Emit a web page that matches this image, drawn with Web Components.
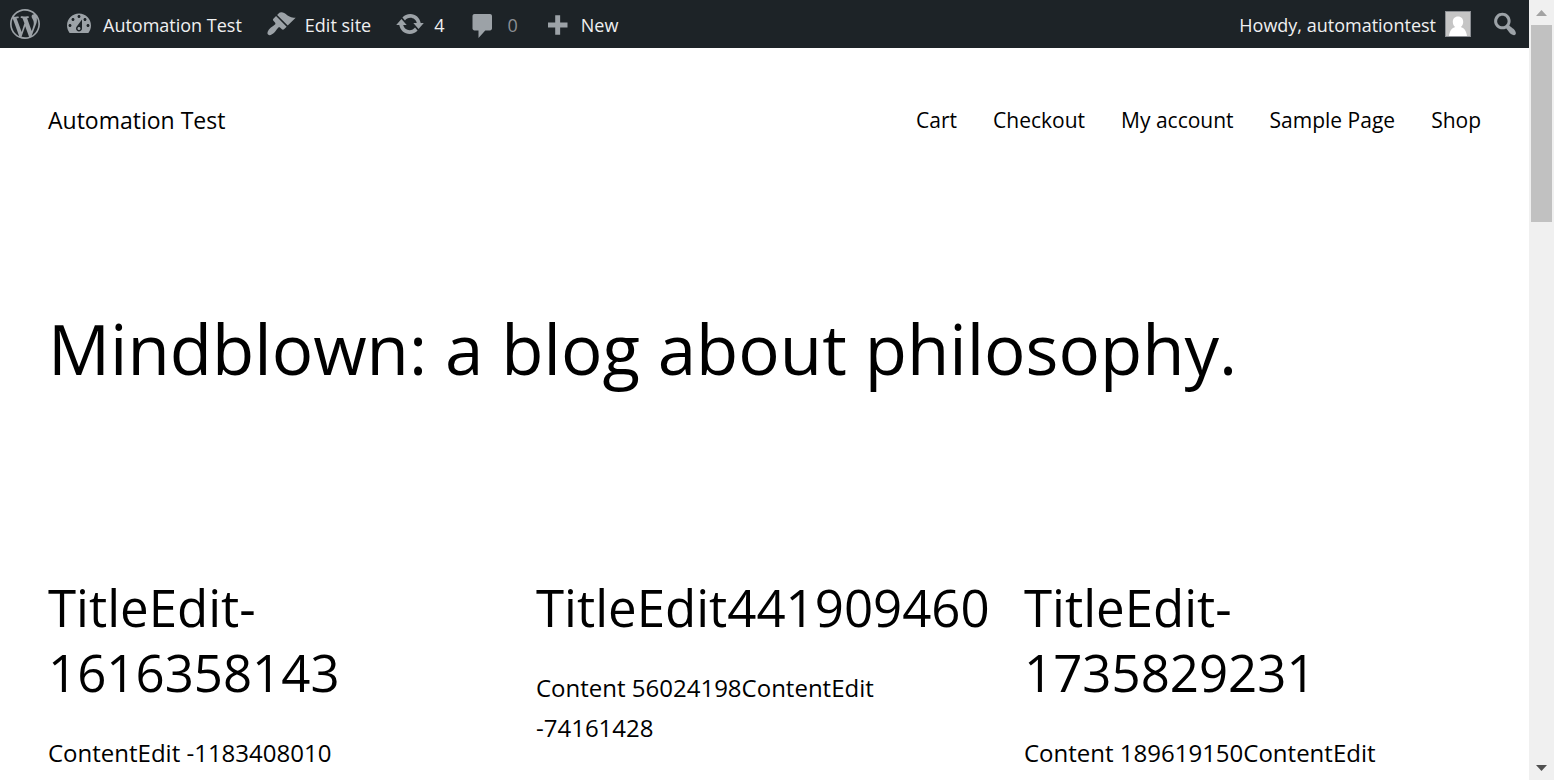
<!DOCTYPE html>
<html lang="en">
<head>
<meta charset="utf-8">
<meta name="viewport" content="width=device-width, initial-scale=1">
<title>Automation Test</title>
<style>
  body { margin: 0; background: #fff; color: #000; font-family: "Segoe UI", "Open Sans", "Noto Sans", sans-serif; }
</style>
</head>
<body>
<blog-shell>
  <admin-bar slot="bar"></admin-bar>
  <site-header name="Automation Test"></site-header>
  <page-title>Mindblown: a blog about philosophy.</page-title>
  <post-grid>
    <post-card heading="TitleEdit-1616358143">ContentEdit -1183408010</post-card>
    <post-card heading="TitleEdit441909460">Content 56024198ContentEdit -74161428</post-card>
    <post-card heading="TitleEdit-1735829231">Content 189619150ContentEdit</post-card>
  </post-grid>
</blog-shell>
<script>
const ICONS = {
  wordpress: 'M20 10c0-5.51-4.49-10-10-10C4.48 0 0 4.49 0 10c0 5.52 4.48 10 10 10 5.51 0 10-4.48 10-10zM7.78 15.37L4.37 6.22c.55-.02 1.17-.08 1.17-.08.5-.06.44-1.13-.06-1.11 0 0-1.45.11-2.37.11-.18 0-.37 0-.58-.01C4.12 2.69 6.87 1.11 10 1.11c2.33 0 4.45.87 6.05 2.34-.68-.11-1.65.39-1.65 1.58 0 .74.45 1.36.9 2.1.35.61.55 1.36.55 2.46 0 1.49-1.4 5-1.4 5l-3.03-8.37c.54-.02.82-.17.82-.17.5-.05.44-1.25-.06-1.22 0 0-1.44.12-2.38.12-.87 0-2.33-.12-2.33-.12-.5-.03-.56 1.2-.06 1.22l.92.08 1.26 3.41zM17.41 10c.24-.64.74-1.87.43-4.25.7 1.29 1.05 2.71 1.05 4.25 0 3.29-1.73 6.24-4.4 7.78.97-2.59 1.94-5.2 2.92-7.78zM6.1 18.09C3.12 16.65 1.11 13.53 1.11 10c0-1.3.23-2.48.72-3.59C3.25 10.3 4.67 14.2 6.1 18.09zm4.03-6.63l2.58 6.98c-.86.29-1.76.45-2.71.45-.79 0-1.57-.11-2.29-.33.81-2.38 1.62-4.74 2.42-7.1z',
  dashboard: 'M3.76 16h12.48c1.1-1.37 1.76-3.11 1.76-5 0-4.42-3.58-8-8-8s-8 3.58-8 8c0 1.89.66 3.63 1.76 5zM10 4c.55 0 1 .45 1 1s-.45 1-1 1-1-.45-1-1 .45-1 1-1zM6 6c.55 0 1 .45 1 1s-.45 1-1 1-1-.45-1-1 .45-1 1-1zm8 0c.55 0 1 .45 1 1s-.45 1-1 1-1-.45-1-1 .45-1 1-1zm-5.37 5.55L12 7v6c0 1.1-.9 2-2 2s-2-.9-2-2c0-.57.24-1.08.63-1.45zM4 10c.55 0 1 .45 1 1s-.45 1-1 1-1-.45-1-1 .45-1 1-1zm12 0c.55 0 1 .45 1 1s-.45 1-1 1-1-.45-1-1 .45-1 1-1zm-5 3c0-.55-.45-1-1-1s-1 .45-1 1 .45 1 1 1 1-.45 1-1z',
  brush: 'M14.48 11.06L7.41 3.99l1.5-1.5c.5-.56 2.3-.47 3.51.32 1.21.8 1.43 1.28 2.91 2.1 1.18.64 2.45 1.26 4.45.85zm-.71.71L6.7 4.7 4.93 6.47c-.39.39-.39 1.02 0 1.41l1.06 1.06c.39.39.39 1.03 0 1.42-.6.6-1.43 1.11-2.21 1.69-.35.26-.7.53-1.01.84C1.43 14.23.4 16.08 1.4 17.07c.99 1 2.84-.03 4.18-1.36.31-.31.58-.66.85-1.02.57-.78 1.08-1.61 1.69-2.21.39-.39 1.02-.39 1.41 0l1.06 1.06c.39.39 1.02.39 1.41 0z',
  update: 'M10.2 3.28c3.53 0 6.43 2.61 6.92 6h2.08l-3.5 4-3.5-4h2.32c-.45-1.97-2.21-3.45-4.32-3.45-1.45 0-2.73.71-3.54 1.78L4.95 5.66C6.23 4.2 8.11 3.28 10.2 3.28zm-.4 13.44c-3.52 0-6.43-2.61-6.92-6H.8l3.5-4c1.17 1.33 2.33 2.67 3.5 4H5.48c.45 1.97 2.21 3.45 4.32 3.45 1.45 0 2.73-.71 3.54-1.78l1.71 1.95c-1.28 1.46-3.15 2.38-5.25 2.38z',
  comment: 'M4.3 3.3h10.400c.7 0 1.300.6 1.300 1.300v8.400c0 .7-.6 1.300-1.300 1.300H11.500l-4.500 5v-5H4.300c-.7 0-1.300-.6-1.300-1.300V4.600c0-.7.6-1.300 1.300-1.300z',
  plus: 'M17 9v3.300h-4.900v4.900H8.800v-4.900H4V9h4.800V4.100h3.300V9z',
  search: 'M12.14 4.18c1.87 1.87 2.11 4.75.72 6.89.12.1.22.21.36.31.2.16.47.36.81.59.34.24.56.39.66.47.42.31.73.57.94.78.32.32.6.65.84 1 .25.35.44.69.59 1.04.14.35.21.68.18 1-.02.32-.14.59-.36.81s-.49.34-.81.36c-.31.02-.65-.04-.99-.19-.35-.14-.7-.34-1.04-.59-.35-.24-.68-.52-1-.84-.21-.21-.47-.52-.77-.93-.1-.13-.25-.35-.47-.66-.22-.32-.4-.57-.56-.78-.16-.2-.29-.35-.44-.5-2.07 1.09-4.69.76-6.44-.98-2.14-2.15-2.14-5.64 0-7.78 2.15-2.15 5.63-2.15 7.78 0zm-1.41 6.36c1.36-1.37 1.36-3.58 0-4.95-1.37-1.37-3.59-1.37-4.95 0-1.37 1.37-1.37 3.58 0 4.95 1.36 1.37 3.58 1.37 4.95 0z'
};

const define = (name, render) => customElements.define(name, class extends HTMLElement {
  constructor() { super(); this.attachShadow({ mode: 'open' }); }
  connectedCallback() { this.shadowRoot.innerHTML = render(this); }
});

define('dash-icon', el => `
  <style>
    :host { display: block; flex: none; width: 30px; height: 30px; color: #9ca2a7; }
    svg { display: block; width: 100%; height: 100%; fill: currentColor; }
  </style>
  <svg viewBox="0 0 20 20" aria-hidden="true"><path d="${ICONS[el.getAttribute('name')]}"/></svg>`);

define('user-avatar', () => `
  <style>
    :host { display: block; flex: none; box-sizing: border-box; width: 26px; height: 26px; border: 1px solid #8c8f94; background: #c5c5c5; }
    svg { display: block; width: 100%; height: 100%; fill: #fff; }
  </style>
  <svg viewBox="0 0 24 24" aria-hidden="true">
    <path d="M12 4.500c3.300 0 5.200 2.400 5.200 5.400 0 2.200-1 4.200-2.500 5.100 3.300.9 5.600 3.500 6.300 9H3c.7-5.500 3-8.100 6.300-9-1.500-.9-2.500-2.900-2.500-5.100 0-3 1.900-5.400 5.200-5.400z"/>
  </svg>`);

define('admin-item', el => `
  <style>
    :host { display: block; }
    a { display: flex; align-items: center; gap: 9px; height: 48px; color: var(--item-color, #f0f0f1); font-size: 18px; line-height: 48px; text-decoration: none; white-space: nowrap; }
    span { padding-top: 2px; }
  </style>
  <a href="#" aria-label="${el.getAttribute('label')}"><slot name="icon"></slot>${el.hasAttribute('plain') ? '' : '<span><slot></slot></span>'}<slot name="end"></slot></a>`);

define('admin-bar', () => `
  <style>
    :host { display: block; background: #1d2327; }
    nav { display: flex; justify-content: space-between; height: 48px; padding: 0 9px 0 10px; }
    .group { display: flex; gap: 24px; }
    .right { gap: 19px; }
    .comments { --item-color: #8c8f94; }
  </style>
  <nav aria-label="Toolbar">
    <div class="group">
      <admin-item plain label="About WordPress"><dash-icon slot="icon" name="wordpress"></dash-icon></admin-item>
      <admin-item label="Automation Test"><dash-icon slot="icon" name="dashboard"></dash-icon>Automation Test</admin-item>
      <admin-item label="Edit site"><dash-icon slot="icon" name="brush"></dash-icon>Edit site</admin-item>
      <admin-item label="4 updates"><dash-icon slot="icon" name="update"></dash-icon>4</admin-item>
      <admin-item label="0 comments" class="comments"><dash-icon slot="icon" name="comment"></dash-icon>0</admin-item>
      <admin-item label="New"><dash-icon slot="icon" name="plus"></dash-icon>New</admin-item>
    </div>
    <div class="group right">
      <admin-item label="Howdy, automationtest">Howdy, automationtest<user-avatar slot="end"></user-avatar></admin-item>
      <admin-item plain label="Search"><dash-icon slot="icon" name="search"></dash-icon></admin-item>
    </div>
  </nav>`);

define('site-header', el => `
  <style>
    :host { display: block; padding: 48px 48px 128px; }
    header, nav { display: flex; align-items: center; }
    header { justify-content: space-between; height: 48px; }
    nav { gap: 36px; font-size: 21px; }
    .name { font-size: 23px; }
    a { color: inherit; text-decoration: none; white-space: nowrap; }
  </style>
  <header>
    <a class="name" href="#">${el.getAttribute('name')}</a>
    <nav aria-label="Pages">
      <a href="#">Cart</a><a href="#">Checkout</a><a href="#">My account</a><a href="#">Sample Page</a><a href="#">Shop</a>
    </nav>
  </header>`);

define('page-title', () => `
  <style>
    :host { display: block; padding: 26px 48px 177px; }
    h1 { margin: 0; font-size: 69px; line-height: 100px; font-weight: 400; }
  </style>
  <h1><slot></slot></h1>`);

define('post-grid', () => `
  <style>
    :host { display: grid; grid-template-columns: repeat(3, minmax(0, 1fr)); gap: 31px; padding: 0 48px 48px; }
  </style>
  <slot></slot>`);

define('post-card', el => `
  <style>
    :host { display: block; }
    h2 { margin: 0 0 28px; font-size: 51px; line-height: 65px; font-weight: 400; }
    a { color: inherit; text-decoration: none; }
    p { margin: 0; font-size: 24px; line-height: 40px; }
  </style>
  <article>
    <h2><a href="#">${el.getAttribute('heading')}</a></h2>
    <p><slot></slot></p>
  </article>`);

define('scroll-rail', () => `
  <style>
    :host { display: flex; flex-direction: column; align-items: center; width: 25px; background: #f0f0f0; }
    .cap { display: grid; place-items: center; flex: none; width: 25px; height: 25px; }
    .track { flex: 1; width: 21px; }
    .thumb { height: 27%; background: #c1c1c1; }
    svg { display: block; width: 11px; height: 6px; }
  </style>
  <div class="cap"><svg viewBox="0 0 11 6"><path d="M0 6L5.500 0 11 6z" fill="#a3a3a3"/></svg></div>
  <div class="track"><div class="thumb"></div></div>
  <div class="cap"><svg viewBox="0 0 11 6"><path d="M0 0L5.500 6 11 0z" fill="#505050"/></svg></div>`);

define('blog-shell', () => `
  <style>
    :host { display: grid; grid-template-columns: minmax(0, 1fr) auto; height: 100vh; overflow: hidden; }
    .view { min-height: 0; overflow: hidden; }
  </style>
  <div class="view"><slot name="bar"></slot><main><slot></slot></main></div>
  <scroll-rail aria-hidden="true"></scroll-rail>`);
</script>
</body>
</html>
